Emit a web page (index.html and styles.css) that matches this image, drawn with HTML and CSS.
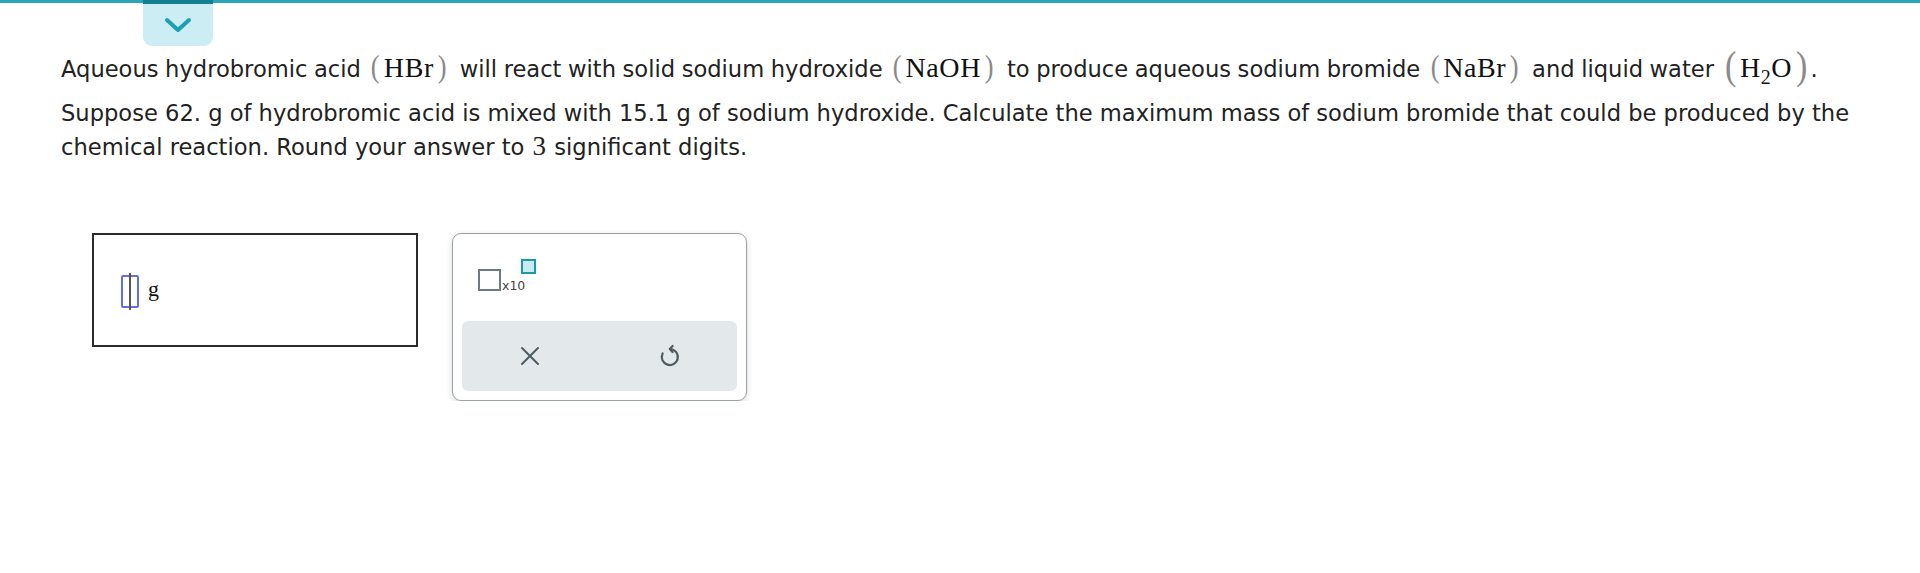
FILE: index.html
```html
<!DOCTYPE html>
<html>
<head>
<meta charset="utf-8">
<link rel="stylesheet" href="styles.css">
</head>
<body>
<div class="topbar">
  <div class="tab">
    <svg class="chev" width="28" height="16" viewBox="0 0 28 16"><path d="M3 3 L14 13 L25 3" fill="none" stroke="#1b9fb4" stroke-width="4" stroke-linecap="round" stroke-linejoin="round"/></svg>
  </div>
</div>
<div class="content">
  <p class="p1">Aqueous hydrobromic acid <span class="m"><span class="par">(</span><span class="mi">HBr</span><span class="par">)</span></span> will react with solid sodium hydroxide <span class="m"><span class="par">(</span><span class="mi">NaOH</span><span class="par">)</span></span> to produce aqueous sodium bromide <span class="m"><span class="par">(</span><span class="mi">NaBr</span><span class="par">)</span></span> and liquid water <span class="m last"><span class="par big">(</span><span class="mi">H<sub>2</sub>O</span><span class="par big">)</span></span>.</p>
  <p class="p2">Suppose 62. g of hydrobromic acid is mixed with 15.1 g of sodium hydroxide. Calculate the maximum mass of sodium bromide that could be produced by the chemical reaction. Round your answer to <span class="m3">3</span> significant digits.</p>

  <div class="answer-row">
    <div class="answer-box">
      <span class="slot"><span class="caret"></span></span><span class="unit">g</span>
    </div>
    <div class="tools">
      <div class="tools-top">
        <span class="sci"><span class="sq"></span><span class="x10">x10</span><span class="sup"></span></span>
      </div>
      <div class="tools-bottom">
        <svg width="20" height="20" viewBox="0 0 20 20"><path d="M2 2 L18 18 M18 2 L2 18" stroke="#4d5c62" stroke-width="2" stroke-linecap="round"/></svg>
        <svg width="24" height="24" viewBox="0 0 24 24"><path d="M12 5 A8 8 0 1 1 4.6 9.5" fill="none" stroke="#4d5c62" stroke-width="2.2" stroke-linecap="round"/><path d="M14.6 2 L11.8 5 L14.6 8" fill="none" stroke="#4d5c62" stroke-width="2.2" stroke-linecap="round" stroke-linejoin="round"/></svg>
      </div>
    </div>
  </div>
</div>
</body>
</html>
```
FILE: styles.css
```css
html, body {
  margin: 0;
  padding: 0;
  background: #ffffff;
}
body {
  font-family: "DejaVu Sans", Verdana, sans-serif;
  color: #222222;
}
.topbar {
  border-top: 3px solid #2aa6b8;
  height: 43px;
}
.tab {
  margin-left: 143px;
  margin-top: -3px;
  width: 70px;
  height: 46px;
  background: #cdedf4;
  border-top: 4px solid #137f92;
  box-sizing: border-box;
  border-radius: 0 0 9px 9px;
  display: flex;
  justify-content: center;
  padding-top: 13px;
}
.chev {
  display: block;
}
.content {
  padding-left: 61px;
  padding-right: 40px;
}
.p1, .p2 {
  margin: 0;
  font-size: 22.6px;
  line-height: 33px;
}
.p1 {
  margin-top: 7px;
  word-spacing: -0.6px;
}
.p2 {
  margin-top: 11px;
}
.m {
  font-family: "Liberation Serif", "Times New Roman", serif;
  font-size: 28px;
  line-height: 0;
  padding: 0 6px 0 3px;
  color: #111;
  word-spacing: 0;
}
.m.last {
  padding-right: 2px;
}
.mi {
  padding: 0 3px;
  letter-spacing: 0.6px;
}
.par {
  color: #8a8a8a;
  font-size: 31px;
  display: inline-block;
  transform: scaleX(0.85);
}
.par.big {
  font-size: 40px;
  vertical-align: -2px;
}
.m sub {
  font-size: 20px;
  vertical-align: -7px;
  line-height: 0;
}
.m3 {
  font-family: "Liberation Serif", "Times New Roman", serif;
  font-size: 27px;
  margin: 0 1px;
}
.answer-row {
  display: flex;
  align-items: flex-start;
  gap: 34px;
  margin-top: 69px;
  padding-left: 31px;
}
.answer-box {
  width: 326px;
  height: 114px;
  box-sizing: border-box;
  border: 2px solid #2b2b2b;
  display: flex;
  align-items: center;
  padding-left: 27px;
  padding-top: 2px;
}
.slot {
  position: relative;
  width: 18px;
  height: 33px;
  box-sizing: border-box;
  border: 2px solid #6070dc;
  border-radius: 2px;
  display: flex;
  justify-content: center;
}
.caret {
  width: 2px;
  height: 37px;
  margin-top: -4px;
  background: #555;
}
.unit {
  font-family: "Liberation Serif", "Times New Roman", serif;
  font-size: 22px;
  margin-left: 9px;
  margin-top: -4px;
  color: #111;
}
.tools {
  width: 295px;
  height: 168px;
  box-sizing: border-box;
  border: 1px solid #9aa3a6;
  border-radius: 9px;
  box-shadow: 0 2px 6px rgba(0,0,0,0.15);
  background: #fff;
  display: flex;
  flex-direction: column;
  padding: 0 9px 9px 9px;
}
.tools-top {
  height: 87px;
  display: flex;
  align-items: flex-start;
}
.sci {
  display: flex;
  align-items: flex-end;
  margin-left: 16px;
  margin-top: 26px;
  height: 31px;
}
.sq {
  width: 23px;
  height: 22px;
  box-sizing: border-box;
  border: 2px solid #6b7b80;
}
.x10 {
  font-family: "DejaVu Sans", sans-serif;
  font-size: 12.5px;
  color: #444;
  line-height: 1;
  margin-left: 1px;
  margin-bottom: -1px;
}
.sup {
  align-self: flex-start;
  width: 15px;
  height: 15px;
  box-sizing: border-box;
  border: 2px solid #1a9aa8;
  background: #c9ecf3;
  margin-left: -4px;
  margin-top: -1px;
}
.tools-bottom {
  flex: 1;
  background: #e3e8ea;
  border-radius: 6px;
  display: flex;
  align-items: center;
  justify-content: space-between;
  padding: 0 55px 0 58px;
}
```
